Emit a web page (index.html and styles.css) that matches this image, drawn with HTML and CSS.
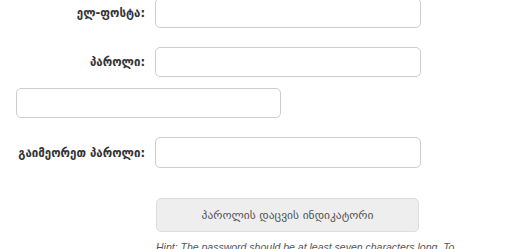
FILE: index.html
```html
<!DOCTYPE html>
<html lang="ka">
<head>
<meta charset="utf-8">
<link rel="stylesheet" href="styles.css">
</head>
<body>
<form class="form">
  <div class="row row-email">
    <label class="label" for="mail">ელ-ფოსტა:</label>
    <input class="field" id="mail" type="text">
  </div>
  <div class="row row-pass">
    <label class="label" for="pass">პაროლი:</label>
    <input class="field" id="pass" type="password">
  </div>
  <div class="row row-extra">
    <input class="field" type="text">
  </div>
  <div class="row row-confirm">
    <label class="label" for="pass2">გაიმეორეთ პაროლი:</label>
    <input class="field" id="pass2" type="password">
  </div>
  <div class="strength">
    <div class="meter">პაროლის დაცვის ინდიკატორი</div>
    <p class="hint">Hint: The password should be at least seven characters long. To make it stronger, use upper and lower case letters, numbers and symbols.</p>
  </div>
</form>
</body>
</html>
```
FILE: styles.css
```css
html, body {
  margin: 0;
  padding: 0;
  background: #fff;
}
body {
  font-family: "DejaVu Sans", "Liberation Sans", sans-serif;
  color: #333;
  overflow: hidden;
}
.form {
  margin-top: -2px;
  display: flex;
  flex-direction: column;
}
.row {
  display: flex;
  align-items: center;
}
.label {
  width: 145px;
  margin-right: 10px;
  text-align: right;
  font-weight: bold;
  font-size: 11.5px;
  color: #333;
}
.field {
  box-sizing: border-box;
  width: 266px;
  height: 30px;
  margin: 0;
  border: 1px solid #ccc;
  border-radius: 5px;
  background: #fff;
  padding: 0 8px;
}
.row-pass { margin-top: 19px; }
.row-extra { margin-top: 11px; padding-left: 16px; }
.row-extra .field { width: 265px; }
.row-confirm { margin-top: 19px; }
.row-confirm .field { height: 31px; }
.strength {
  margin-top: 30px;
  margin-left: 156px;
  width: 310px;
}
.meter {
  box-sizing: border-box;
  width: 263px;
  height: 34px;
  background: #eee;
  border: 1px solid #ddd;
  border-radius: 5px;
  display: flex;
  align-items: center;
  justify-content: center;
  font-size: 11.5px;
  color: #555;
}
.hint {
  margin: 8px 0 0;
  font-family: "Liberation Sans", Arial, sans-serif;
  font-style: italic;
  font-size: 10.5px;
  color: #555;
  line-height: 14px;
}
```
